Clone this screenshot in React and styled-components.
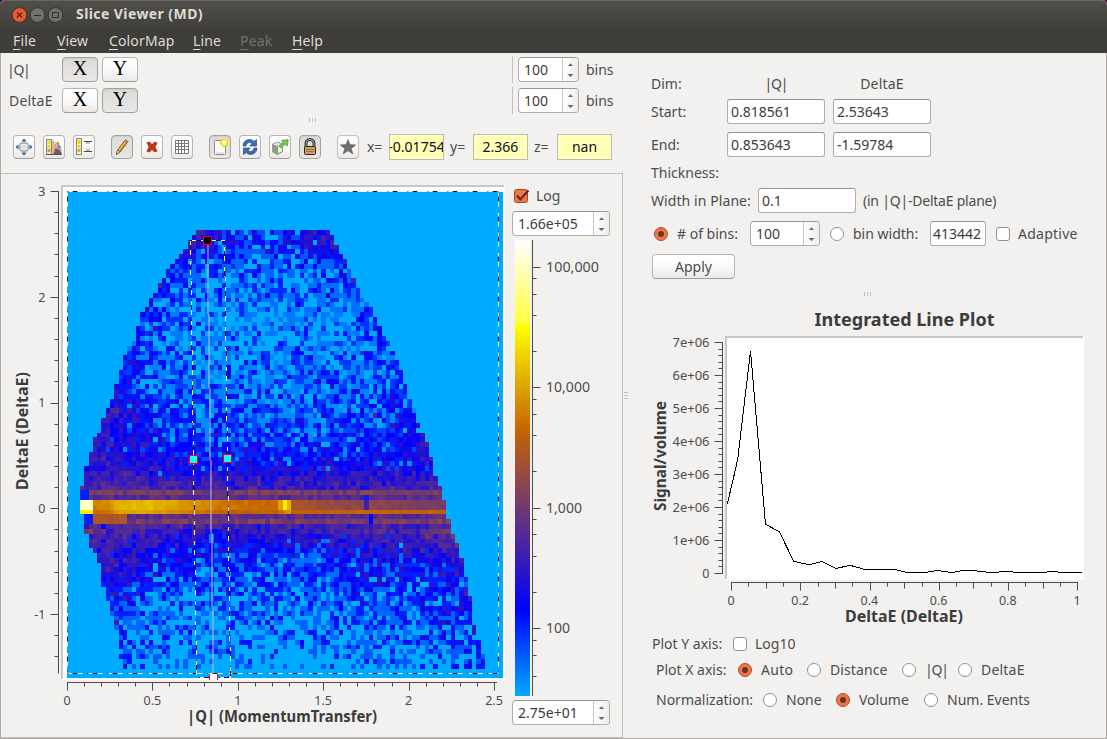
import React from "react";
import styled, { createGlobalStyle, css } from "styled-components";

const Global = createGlobalStyle`
  * { box-sizing: border-box; }
  html, body { margin: 0; padding: 0; background: #f2f1f0; overflow: hidden; }
  body, text { font-family: "Noto Sans", "Open Sans", sans-serif; }
  body { font-size: 14px; color: #4c4c4c; line-height: 18px; }
  svg { display: block; }
`;

/* ---------- window chrome ---------- */
const Window = styled.div`
  width: 1107px;
  height: 739px;
  display: flex;
  flex-direction: column;
  background: #f2f1f0;
  overflow: hidden;
`;
const TitleBar = styled.header`
  height: 28px;
  flex: none;
  display: flex;
  align-items: center;
  padding-left: 12px;
  border-top: 1px solid #66655f;
  border-radius: 5px 5px 0 0;
  background: linear-gradient(#504f49, #403f3b);
  box-shadow: 0 -6px 0 #40102c;
`;
const WindowTitle = styled.h1`
  margin: 0 0 2px 12px;
  font-size: 14px;
  font-weight: 700;
  letter-spacing: 0.42px;
  color: #dfdbd2;
`;
const MenuBar = styled.nav`
  height: 25px;
  flex: none;
  display: flex;
  padding: 4px 0 0 13px;
  background: #3e3d39;
  color: #dfdbd2;
`;
const MenuItem = styled.span`
  width: ${(p) => p.$w}px;
  color: ${(p) => (p.$off ? "#74726b" : "inherit")};
  letter-spacing: 0.14px;
  white-space: nowrap;
  u { text-underline-offset: 3px; text-decoration-thickness: 1px; }
`;
const Body = styled.main`
  flex: 1;
  display: flex;
  border: solid #aeaaa5;
  border-width: 0 1px 1px 1px;
  min-height: 0;
`;
const LeftPane = styled.section`
  width: 622px;
  display: flex;
  flex-direction: column;
  flex: none;
`;
const RightPane = styled.section`
  flex: 1;
  display: flex;
  flex-direction: column;
  min-width: 0;
`;

/* ---------- controls ---------- */
const Text = styled.span`
  width: ${(p) => (p.$w ? p.$w + "px" : "auto")};
  text-align: ${(p) => p.$align || "left"};
  letter-spacing: ${(p) => p.$ls || 0}px;
  white-space: nowrap;
  flex: none;
`;
const Row = styled.div`
  display: flex;
  align-items: center;
  flex: none;
  height: ${(p) => p.$h}px;
  padding-left: ${(p) => p.$l || 0}px;
`;
const raised = css`
  border: 1px solid #b9b5b0;
  border-bottom-color: #9f9b96;
  border-radius: 4px;
  background: linear-gradient(#fff, #fbfafa 50%, #ebe9e7);
`;
const pressed = css`
  border: 1px solid #a5a19c;
  border-radius: 4px;
  background: linear-gradient(#dcdad8, #e9e7e5);
  box-shadow: inset 0 1px 1px #cfccc9;
`;
const DimButton = styled.button`
  ${(p) => (p.$on ? pressed : raised)}
  width: 36px;
  height: 25px;
  margin-right: 4px;
  padding: 0 0 2px;
  font: 20px/21px "Liberation Serif", serif;
  color: #000;
`;
const ToolButton = styled.button`
  ${(p) => (p.$on ? pressed : raised)}
  width: 22px;
  height: 24px;
  margin-right: 8px;
  padding: 0;
  display: flex;
  align-items: center;
  justify-content: center;
  flex: none;
  opacity: ${(p) => (p.$dim ? 0.8 : 1)};
`;
const ToolGap = styled.i`
  width: ${(p) => p.$w}px;
  flex: none;
`;
const VGap = styled.i`
  height: ${(p) => p.$h}px;
  flex: none;
`;
const PushButton = styled.button`
  ${raised}
  width: 83px;
  height: 25px;
  margin: 8px 0 0 1px;
  padding: 0;
  display: block;
  font: inherit;
  color: inherit;
`;
const Field = styled.div`
  width: ${(p) => p.$w}px;
  height: 25px;
  flex: none;
  display: flex;
  align-items: center;
  justify-content: ${(p) => (p.$end ? "flex-end" : "flex-start")};
  padding: 0 4px 0 3px;
  border: 1px solid #b0aca7;
  border-top-color: #989490;
  border-radius: 3px;
  background: #fff;
  color: #3c3c3c;
  overflow: hidden;
  white-space: nowrap;
`;
const SpinBox = styled.div`
  width: ${(p) => p.$w}px;
  height: 25px;
  flex: none;
  display: flex;
  border: 1px solid #b0aca7;
  border-top-color: #989490;
  border-radius: 4px;
  background: #fff;
  color: #3c3c3c;
  overflow: hidden;
`;
const SpinValue = styled.span`
  flex: 1;
  padding: 3px 0 0 5px;
  white-space: nowrap;
`;
const SpinArrows = styled.span`
  width: 16px;
  border-left: 1px solid #c9c6c2;
  background: linear-gradient(90deg, #fff, #efedeb);
`;
const Readout = styled.output`
  width: 55px;
  height: 26px;
  margin-right: 6px;
  flex: none;
  display: flex;
  align-items: center;
  justify-content: center;
  overflow: hidden;
  white-space: nowrap;
  border: 1px solid #bcb9b5;
  background: #ffffb8;
  color: #111;
`;
const Divider = styled.i`
  width: 1px;
  height: 27px;
  margin-right: 5px;
  background: #c4c1bd;
`;
const RadioRing = styled.span`
  width: 14px;
  height: 14px;
  flex: none;
  display: flex;
  align-items: center;
  justify-content: center;
  border-radius: 50%;
  border: 1px solid ${(p) => (p.$on ? "#b04a28" : "#94908b")};
  background: ${(p) => (p.$on ? "#ee7648" : "#fff")};
  &::after {
    content: "";
    width: 6px;
    height: 6px;
    border-radius: 50%;
    background: ${(p) => (p.$on ? "#6b3420" : "transparent")};
  }
`;
const CheckSquare = styled.span`
  width: 14px;
  height: 14px;
  flex: none;
  border-radius: 3px;
  border: 1px solid #94908b;
  background: #fff;
`;
const Grip = styled.div`
  display: flex;
  flex-direction: ${(p) => (p.$v ? "column" : "row")};
  align-items: center;
  justify-content: center;
  gap: 2px;
  flex: none;
  width: ${(p) => (p.$v ? "6px" : "auto")};
  height: ${(p) => (p.$v ? "auto" : "8px")};
  i {
    width: ${(p) => (p.$v ? 4 : 1)}px;
    height: ${(p) => (p.$v ? 1 : 4)}px;
    background: #c6c3bf;
  }
`;
const Dots = ({ v }) => (
  <Grip $v={v}><i /><i /><i /></Grip>
);

const Spin = ({ w, children }) => (
  <SpinBox $w={w}>
    <SpinValue>{children}</SpinValue>
    <SpinArrows>
      <svg width="15" height="23">
        <path d="M5 8 L7.5 5.2 L10 8Z M4.5 16 L10.5 16 L7.5 19Z" fill="#6a6866" />
      </svg>
    </SpinArrows>
  </SpinBox>
);

/* ---------- left side ---------- */
const ToolRow = styled(Row)`
  margin-bottom: 3px;
`;
const PlotPanel = styled.div`
  flex: 1;
  display: flex;
  border: solid #c2bfbb;
  border-width: 1px 1px 1px 0;
  min-height: 0;
`;
const ColourColumn = styled.div`
  display: flex;
  flex-direction: column;
  padding: 12px 0 0 5px;
`;
const LogRow = styled.label`
  display: flex;
  align-items: center;
  gap: 6px;
  height: 20px;
  margin: 0 0 5px 2px;
`;

/* ---------- right side ---------- */
const Form = styled.div`
  padding: 15px 0 0 22px;
`;
const Columns = styled.div`
  display: grid;
  grid-template-columns: 68px 98px 98px;
  grid-template-rows: 31px 25px 41px;
  column-gap: 8px;
  align-items: center;
`;
const Options = styled.div`
  display: flex;
  flex-direction: column;
`;

/* ---------- tool icons ---------- */
const ICONS = {
  fit: (
    <>
      <rect x="6" y="6" width="8" height="8" rx="1.5" fill="#eee" stroke="#777" />
      <rect x="8" y="8" width="4" height="4" fill="#ddd" />
      <path d="M10 1.5 L12.6 4.5 H7.4Z M10 18.5 L12.6 15.5 H7.4Z M1.5 10 L4.5 7.4 V12.6Z M18.5 10 L15.5 7.4 V12.6Z" fill="#2d5c9e" />
    </>
  ),
  autoscale: (
    <>
      <rect x="2.5" y="2.5" width="5" height="15" fill="#e8e4d8" stroke="#888" />
      <path d="M3.5 4h3v3h-3zM3.5 8h3v3h-3z" fill="#ffd900" />
      <path d="M3.5 12h3v3h-3z" fill="#cfa030" />
      <path d="M8 17 V3 L10.5 3.5 L18 13 V17Z" fill="#c4c2be" />
      <path d="M8.2 12 L10.5 5 L12 6.5 L11 14 L9 16Z" fill="#f0b060" />
      <path d="M11 8 L13.5 4.5 L15.5 6 L13.5 10Z" fill="#e8873a" />
      <path d="M12.5 10 L15 7.5 L17 10.5 L15 13Z" fill="#5a6cae" />
      <path d="M9.5 17 L11.5 11 L14 12.5 L16.5 12 L17.5 17Z" fill="#7a5560" />
      <path d="M10 4 L17.5 15" stroke="#f6f6f6" strokeWidth=".7" />
      <path d="M2 17.5H18" stroke="#555" />
    </>
  ),
  range: (
    <>
      <rect x="2.5" y="1.5" width="5" height="16" fill="#f4f0e4" stroke="#888" />
      <path d="M3.5 3h3v4h-3zM3.5 8h3v3h-3z" fill="#f5da00" />
      <path d="M3.5 12h3v3h-3z" fill="#cfae50" />
      <path d="M10 4.5H18M10 14.5H18" stroke="#444" />
      <path d="M12 7 L14 5.2 L16 7M12 12 L14 13.8 L16 12" stroke="#888" fill="none" />
    </>
  ),
  pencil: (
    <>
      <path d="M4.3 17.5 L5.6 13 L13.4 2.8 L16 4.5 L8.2 15Z" fill="#d9932c" stroke="#6d4413" strokeWidth=".8" />
      <path d="M4.3 17.5 L5.6 13 L8.2 15Z" fill="#e8d7b0" stroke="#555" strokeWidth=".6" />
      <path d="M6.7 13 L14 3.8" stroke="#f6c767" />
      <path d="M13.4 2.8 L16 4.5 L14.9 6 L12.3 4.2Z" fill="#c67c5c" />
    </>
  ),
  cross: <path d="M5 5.8 L7.6 5 L10 7.8 L12.6 5 L15 6 L12.8 10 L15 14 L12.6 15 L10 12.3 L7.6 15 L5 14.2 L7.2 10Z" fill="#c8330d" stroke="#9c2508" strokeWidth=".8" />,
  grid: <path d="M3.5 3.5h13v13h-13zM6.5 3v14M9.5 3v14M12.5 3v14M3 6.5h14M3 9.5h14M3 12.5h14" fill="#fff" stroke="#777" />,
  newItem: (
    <>
      <rect x="4.5" y="3.5" width="11" height="14" rx="1" fill="#fafafa" stroke="#888" />
      <path d="M6 16h8" stroke="#ccc" />
      <path d="M14 0.8 L16 3 L19 3.4 L18 6.5 L18.4 9 L15.5 8.8 L13.2 10.5 L11.5 8.2 L9.4 6.5 L10.8 4Z" fill="#f5e100" />
      <circle cx="14.2" cy="5.6" r="2.3" fill="#fffde0" />
    </>
  ),
  refresh: (
    <>
      <path d="M3 9 C3 3 10 0.5 14 4.5 L16.5 2.5 V9 H9.8 L12 6.7 C9.5 4.5 7 5.5 6 9Z" fill="#3d6cb3" stroke="#204a87" strokeWidth=".7" />
      <path d="M17 11 C17 17 10 19.5 6 15.5 L3.5 17.5 V11 H10.2 L8 13.3 C10.5 15.5 13 14.5 14 11Z" fill="#3d6cb3" stroke="#204a87" strokeWidth=".7" />
    </>
  ),
  rebin: (
    <>
      <path d="M2.5 7 L7.5 5 L12.5 7 V14.5 L7.5 17.5 L2.5 15Z" fill="#e2e2de" stroke="#888" strokeWidth=".8" />
      <path d="M2.5 7 L7.5 9 V17.5 L2.5 15Z" fill="#97968f" />
      <path d="M7.5 9.5 L12.5 7.5 V14.5 L7.5 17.3Z" fill="#efefec" stroke="#6cb04c" />
      <path d="M9.5 9.5 C10 8 11.5 6.6 13.2 5.8 L11.5 3.6 L18.2 2.5 L17.4 9 L15.5 7.4 C13.6 8 12.4 9 11.6 11Z" fill="#7cc35c" stroke="#419327" strokeWidth=".7" />
    </>
  ),
  lock: (
    <>
      <path d="M6 10V6.5a4 4 0 0 1 8 0V10" stroke="#333" strokeWidth="3" fill="none" />
      <path d="M6 10V6.5a4 4 0 0 1 8 0V10" stroke="#aaa" strokeWidth="1" fill="none" />
      <rect x="4.5" y="9.5" width="11" height="8" rx="1" fill="#cf9f63" stroke="#33251a" />
      <path d="M6 12.5h8M6 14.5h8" stroke="#9c6f3b" />
    </>
  ),
  star: <path d="M10 2.4 L12 7.6 L17.8 7.9 L13.3 11.4 L14.8 17 L10 13.8 L5.2 17 L6.7 11.4 L2.2 7.9 L8 7.6Z" fill="#505050" stroke="#3e3e3e" strokeWidth=".6" />,
};
const IconSvg = styled.svg`
  flex: none;
`;
const Icon = ({ name }) => (
  <IconSvg width="20" height="20" viewBox="0 0 20 20">{ICONS[name]}</IconSvg>
);

/* ---------- colour scale ---------- */
const STOPS = [
  [0, 0, 170, 255],
  [0.19, 0, 0, 255],
  [0.585, 200, 100, 0],
  [0.813, 255, 255, 0],
  [0.817, 255, 255, 60],
  [1, 255, 255, 255],
];
function colour(t) {
  const v = Math.max(0, Math.min(1, t));
  let i = 1;
  while (i < STOPS.length - 1 && v > STOPS[i][0]) i++;
  const a = STOPS[i - 1];
  const b = STOPS[i];
  const f = (v - a[0]) / (b[0] - a[0]);
  return `rgb(${[1, 2, 3].map((k) => Math.round(a[k] + (b[k] - a[k]) * f)).join(",")})`;
}
function interp(table, y) {
  if (y <= table[0][0]) return table[0][1];
  for (let i = 1; i < table.length; i++) {
    if (y <= table[i][0]) {
      const [y0, v0] = table[i - 1];
      const [y1, v1] = table[i];
      return v0 + ((v1 - v0) * (y - y0)) / (y1 - y0);
    }
  }
  return table[table.length - 1][1];
}

/* ---------- heat map ---------- */
const LEFT_EDGE = [[230, 197], [237, 193], [241, 188], [255, 184], [260, 175], [273, 167], [288, 158], [302, 149], [317, 141], [336, 136], [346, 128], [360, 124], [379, 118], [393, 115], [409, 109], [418, 102], [428, 101], [442, 93], [462, 89], [471, 85], [490, 81], [515, 82], [523, 85], [547, 89], [557, 98], [577, 102], [601, 107], [625, 116], [655, 119], [668, 123]];
const RIGHT_EDGE = [[230, 330], [240, 335], [255, 343], [270, 351], [285, 356], [300, 363], [312, 374], [331, 382], [341, 389], [355, 395], [375, 403], [394, 408], [418, 417], [437, 425], [452, 430], [471, 434], [500, 445], [519, 448], [539, 454], [548, 459], [567, 464], [602, 471], [637, 476], [650, 483], [668, 484]];
const UNIT = [[230, 0.11], [260, 0.08], [330, 0.055], [380, 0.045], [420, 0.035], [470, 0.03], [540, 0.06], [600, 0.08], [668, 0.085]];
const MEAN_MID = [[230, 1.3], [245, 1.9], [262, 0.95], [310, 0.7], [350, 0.9], [380, 1.2], [410, 1.9], [435, 2.8], [455, 3.8], [468, 5.5], [476, 8], [485, 11], [526, 10], [534, 6], [545, 3.8], [560, 2.2], [580, 1.4], [600, 0.95], [640, 0.6], [660, 0.45], [668, 0.3]];
const BEAM = [[93, 0.62], [110, 0.64], [120, 0.7], [148, 0.71], [175, 0.68], [215, 0.62], [262, 0.585], [275, 0.6], [296, 0.52], [340, 0.48], [445, 0.42]];
const CELL_W = 4.31;
const CELL_H = 4.82;

function makeCells() {
  let s = 20117;
  const rnd = () => {
    s = (s + 0x6d2b79f5) | 0;
    let t = Math.imul(s ^ (s >>> 15), 1 | s);
    t = (t + Math.imul(t ^ (t >>> 7), 61 | t)) ^ t;
    return ((t ^ (t >>> 14)) >>> 0) / 4294967296;
  };
  const poisson = (m) => {
    const l = Math.exp(-m);
    let k = 0;
    let p = rnd();
    while (p > l) { k++; p *= rnd(); }
    return k;
  };
  const out = {};
  for (let r = 8; r < 99; r++) {
    const y = 191.5 + (r + 0.5) * CELL_H;
    const lo = interp(LEFT_EDGE, y);
    const hi = interp(RIGHT_EDGE, y);
    for (let c = 0; c < 100; c++) {
      const x = 67 + (c + 0.5) * CELL_W;
      if (x < lo || x > hi) continue;
      const dl = x - lo;
      const dr = hi - x;
      let t;
      if (r >= 64 && r <= 66) {
        t = interp(BEAM, x) + (rnd() - 0.5) * 0.03;
        if (r === 66) t = x > 250 ? 0.575 + (rnd() - 0.5) * 0.03 : t - 0.035;
        if (x < 93) t = r === 66 ? 0.79 : 0.91 + rnd() * 0.06;
        if (x > 279 && x < 284) t = r === 66 ? 0.6 : 0.68;
        if (x >= 284 && x < 288) t = r === 66 ? 0.63 : 0.79;
        if (x >= 288 && x < 292) t = r === 66 ? 0.66 : 0.7;
        if (r !== 66 && x > 364 && x < 369) t = 0.31;
      } else if (r === 62 || r === 63 || r === 67 || r === 68) {
        const strong = r === 62 || r === 68;
        t = (strong ? 0.42 : 0.36) + (rnd() - 0.5) * 0.09;
        if (r >= 67 && x > 93 && x < 126) t = 0.53 + (rnd() - 0.5) * 0.05;
        if (dl < 9) t = 0.15;
        if (r === 63 && x > 364 && x < 369) t = 0.16;
        if (r >= 67 && x > 368 && x < 373) t = 0.19;
      } else {
        let m = interp(MEAN_MID, y);
        const upper = y < 380;
        const edge = (upper ? 4 : 1.8) * Math.exp(-dl / (upper ? 17 : 15)) + (upper ? 2 : 1.5) * Math.exp(-dr / 22);
        m *= 1 + edge * (y > 460 && y < 530 ? 0 : y > 620 ? 1 : 0.85);
        if (y > 380 && y < 610) {
          const fade = Math.min(1, (y - 380) / 40, (610 - y) / 50);
          m += 3.2 * fade * Math.exp(-Math.pow((x - 122) / 34, 2));
        }
        if (y > 530 && x > 330) m *= 1.45;
        const n = poisson(m);
        if (!n) continue;
        t = interp(UNIT, y) + 0.115 * Math.log(n);
      }
      const key = Math.round(t * 90);
      const px = Math.round(67 + c * CELL_W);
      const py = Math.round(191.5 + r * CELL_H);
      const w = Math.round(67 + (c + 1) * CELL_W) - px;
      const h = Math.round(191.5 + (r + 1) * CELL_H) - py;
      out[key] = (out[key] || "") + `M${px} ${py}h${w}v${h}h${-w}z`;
    }
  }
  return out;
}
const CELLS = makeCells();

const Dashed = ({ d }) => (
  <g fill="none" strokeWidth="1">
    <path d={d} stroke="#111" strokeDasharray="1 4 5 10" />
    <path d={d} stroke="#e8f4fa" strokeDasharray="0 1 4 5 5 5" />
  </g>
);

const range = (n) => Array.from({ length: n }, (_, i) => i);
const AXIS = "#4c4c4c";

function SlicePlot() {
  const yTicks = range(23).map((i) => `M58.5 ${Math.round(191 + i * 21.15) + 0.5}h${i % 5 ? -4 : -8}`).join("");
  const xTicks = range(26).map((i) => `M${Math.round(67 + i * 17.08) + 0.5} 682.5v${i % 5 ? 4 : 8}`).join("");
  return (
    <svg width="506" height="563" viewBox="1 174 506 563" fontSize="12.5" fill={AXIS}>
      <path d="M61 185H505V680H61Z" fill="#fff" />
      <path d="M61 185H504V187H63V679H61Z" fill="#c8c7c6" />
      <rect x="67" y="192" width="436" height="486" fill="#00aaff" />
      <g shapeRendering="crispEdges">
        {Object.entries(CELLS).map(([k, d]) => (
          <path key={k} d={d} fill={colour(k / 90)} />
        ))}
      </g>
      <path d="M208 240V314M209 314V388M210 388V460M211 460V533M212 533V606M213 606V678" fill="none" stroke="#c4c4d4" strokeOpacity=".5" strokeWidth="2" />
      <Dashed d="M67.5 191.5H498.5" />
      <Dashed d="M67.5 191.5V673.5" />
      <Dashed d="M498.5 191.5V673.5" />
      <Dashed d="M67.5 673.5H498.5" />
      <g shapeRendering="crispEdges">
        <Dashed d="M190.5 240.5H224.5L230.5 677.5" />
        <Dashed d="M190.5 240.5L196.5 677.5H230.5" />
      </g>
      <g stroke="#f00" strokeWidth="1">
        <rect x="203.5" y="236.5" width="8" height="8" fill="#000" />
        <rect x="189.5" y="455.5" width="8" height="8" fill="#0ff" />
        <rect x="223.5" y="454.5" width="8" height="8" fill="#0ff" />
        <rect x="210" y="674" width="7" height="6" fill="#fff" stroke="none" />
        <path d="M209.5 674v6M217.5 674v6" />
      </g>
      <path d={`M58.5 191V673.5${yTicks}M67 682.5H497${xTicks}`} stroke={AXIS} fill="none" />
      {["3", "2", "1", "0", "-1"].map((v, i) => (
        <text key={v} x="45.5" y={196 + i * 105.7} textAnchor="end">{v}</text>
      ))}
      {["0", "0.5", "1", "1.5", "2", "2.5"].map((v, i) => (
        <text key={v} x={67 + i * 85.4} y="705" textAnchor="middle">{v}</text>
      ))}
      <g fontSize="15.5" fontWeight="700" fill="#3c3c3c">
        <text x="187" y="722" textLength="190" lengthAdjust="spacingAndGlyphs">|Q| (MomentumTransfer)</text>
        <text transform="translate(28 490) rotate(-90)" textLength="118" lengthAdjust="spacingAndGlyphs">DeltaE (DeltaE)</text>
      </g>
    </svg>
  );
}

function ColourBar() {
  const ticks = [];
  for (let e = 1; e <= 5; e++) {
    [1, 2, 4, 6, 8].forEach((k) => {
      const y = 628 - (e - 2 + Math.log10(k)) * 120.4;
      if (y > 240 && y < 696) ticks.push(`M532.5 ${Math.round(y) + 0.5}h${k === 1 ? 8 : 4}`);
    });
  }
  return (
    <svg width="108" height="462" viewBox="512 238 108 462" fontSize="14" fill={AXIS}>
      <defs>
        <linearGradient id="scale" x1="0" y1="1" x2="0" y2="0">
          {STOPS.map(([o]) => <stop key={o} offset={o} stopColor={colour(o)} />)}
        </linearGradient>
      </defs>
      <rect x="515" y="240" width="15" height="456" fill="url(#scale)" />
      <path d={`M532.5 240V696${ticks.join("")}`} stroke={AXIS} fill="none" />
      {[["100,000", 53], ["10,000", 44], ["1,000", 36], ["100", 24]].map(([v, w], i) => (
        <text key={v} x="546" y={272 + i * 120.4} textLength={w} lengthAdjust="spacingAndGlyphs">{v}</text>
      ))}
    </svg>
  );
}

function LinePlot() {
  const yT = range(36).map((i) => `M722.5 ${Math.round(342 + i * 6.6) + 0.5}h${i % 5 ? -4 : -8}`).join("");
  const xT = range(21).map((i) => `M${Math.round(731 + i * 17.32) + 0.5} 582.5v${i % 4 === 0 ? 8 : i % 2 ? 4 : 6}`).join("");
  return (
    <svg width="477" height="330" viewBox="629 300 477 330" fontSize="12.5" fill={AXIS}>
      <text x="814.5" y="326" fontSize="18.5" fontWeight="700" fill="#3c3c3c" textLength="180" lengthAdjust="spacingAndGlyphs">Integrated Line Plot</text>
      <path d="M725 336H1084V580H725Z" fill="#fff" />
      <path d="M725 336H1083V338H727V579H725Z" fill="#c8c7c6" />
      <polyline
        points="727.3,504 736.5,465 738,457 750.5,351 765.5,524.3 779.3,531.7 793.7,561.3 809,564.7 822,561.5 836,568.5 850,565.3 865,569.5 895,569.5 906.7,572.5 925,572.5 936.7,570.5 952.3,572.5 963,570.5 972,570.5 990,572.5 1008,571.5 1018,572.5 1042,572.5 1053,571.5 1062,572.5 1082,572.5"
        fill="none"
        stroke="#000"
        shapeRendering="crispEdges"
      />
      <path d={`M722.5 342V574${yT}M731 582.5H1078${xT}`} stroke={AXIS} fill="none" />
      {range(8).map((i) => (
        <text key={i} x="709.5" y={347 + i * 33} textAnchor="end" textLength={i === 7 ? undefined : 37} lengthAdjust="spacingAndGlyphs">
          {i === 7 ? "0" : `${7 - i}e+06`}
        </text>
      ))}
      {["0", "0.2", "0.4", "0.6", "0.8", "1"].map((v, i) => (
        <text key={v} x={731 + i * 69.2} y="605" textAnchor="middle">{v}</text>
      ))}
      <g fontSize="15.5" fontWeight="700" fill="#3c3c3c">
        <text x="845" y="622" textLength="118" lengthAdjust="spacingAndGlyphs">DeltaE (DeltaE)</text>
        <text transform="translate(665.5 511) rotate(-90)" textLength="110" lengthAdjust="spacingAndGlyphs">Signal/volume</text>
      </g>
    </svg>
  );
}

const DimRow = ({ name, x, y, ls, inset }) => (
  <Row $h={31} $l={inset}>
    <Text $w={61 - inset} $ls={ls}>{name}</Text>
    <DimButton $on={x}>X</DimButton>
    <DimButton $on={y}>Y</DimButton>
    <ToolGap $w={370} />
    <Divider />
    <Spin w={61}>100</Spin>
    <ToolGap $w={7} />
    <Text>bins</Text>
  </Row>
);

const Radio = ({ on, label, w, ls }) => (
  <>
    <RadioRing $on={on} />
    <ToolGap $w={9} />
    <Text $w={w} $ls={ls}>{label}</Text>
  </>
);

const MENU = [["File", 44], ["View", 52], ["ColorMap", 84], ["Line", 47], ["Peak", 52, true], ["Help", 50]];

export default function App() {
  return (
    <Window>
      <Global />
      <TitleBar>
        <svg width="52" height="18" viewBox="0 0 52 18">
          <circle cx="7.5" cy="9" r="7.4" fill="#e95a2c" stroke="#33322e" />
          <path d="M5 6.5l5 5M10 6.5l-5 5" stroke="#5a2311" strokeWidth="1.2" />
          <circle cx="25.5" cy="9" r="7.4" fill="#73716b" stroke="#33322e" />
          <path d="M22 9.5h7" stroke="#33322e" />
          <circle cx="43.5" cy="9" r="7.4" fill="#73716b" stroke="#33322e" />
          <rect x="40.5" y="6.5" width="6" height="5" fill="none" stroke="#33322e" />
        </svg>
        <WindowTitle>Slice Viewer (MD)</WindowTitle>
      </TitleBar>
      <MenuBar>
        {MENU.map(([m, w, off]) => (
          <MenuItem key={m} $w={w} $off={off}><u>{m[0]}</u>{m.slice(1)}</MenuItem>
        ))}
      </MenuBar>
      <Body>
        <LeftPane>
          <Row $h={1} />
          <DimRow name="|Q|" ls={-1.3} inset={6} x />
          <DimRow name="DeltaE" ls={0.2} inset={8} y />
          <Dots />
          <ToolRow $h={46} $l={12}>
            <ToolButton><Icon name="fit" /></ToolButton>
            <ToolButton><Icon name="autoscale" /></ToolButton>
            <ToolButton><Icon name="range" /></ToolButton>
            <ToolGap $w={8} />
            <ToolButton $on><Icon name="pencil" /></ToolButton>
            <ToolButton><Icon name="cross" /></ToolButton>
            <ToolButton><Icon name="grid" /></ToolButton>
            <ToolGap $w={8} />
            <ToolButton $on><Icon name="newItem" /></ToolButton>
            <ToolButton><Icon name="refresh" /></ToolButton>
            <ToolButton><Icon name="rebin" /></ToolButton>
            <ToolButton $on><Icon name="lock" /></ToolButton>
            <ToolGap $w={8} />
            <ToolButton $dim><Icon name="star" /></ToolButton>
            <Text $w={22} $ls={-0.2}>x=</Text>
            <Readout>-0.01754</Readout>
            <Text $w={23}>y=</Text>
            <Readout>2.366</Readout>
            <Text $w={23}>z=</Text>
            <Readout>nan</Readout>
          </ToolRow>
          <PlotPanel>
            <SlicePlot />
            <ColourColumn>
              <LogRow>
                <svg width="16" height="16" viewBox="0 0 16 16">
                  <rect x="0.5" y="1.5" width="13" height="13" rx="2" fill="#ee7648" stroke="#a8482a" />
                  <path d="M3 7.5L6.3 11.5L14.5 2.5" fill="none" stroke="#5c2c1c" strokeWidth="2" />
                </svg>
                <Text>Log</Text>
              </LogRow>
              <Spin w={98}>1.66e+05</Spin>
              <VGap $h={2} />
              <ColourBar />
              <Spin w={98}>2.75e+01</Spin>
            </ColourColumn>
          </PlotPanel>
        </LeftPane>
        <Dots v />
        <RightPane>
          <Form>
            <Columns>
              <Text>Dim:</Text><Text $align="center" $ls={-1.2}>|Q|</Text><Text $align="center" $ls={0.2}>DeltaE</Text>
              <Text>Start:</Text><Field $w={98}>0.818561</Field><Field $w={98}>2.53643</Field>
              <Text>End:</Text><Field $w={98}>0.853643</Field><Field $w={98}>-1.59784</Field>
            </Columns>
            <Row $h={15}><Text>Thickness:</Text></Row>
            <Row $h={41}>
              <Text $w={107} $ls={0.08}>Width in Plane:</Text>
              <Field $w={98}>0.1</Field>
              <ToolGap $w={7} />
              <Text $ls={-0.22}>(in |Q|-DeltaE plane)</Text>
            </Row>
            <Row $h={25} $l={3}>
              <Radio on label="# of bins:" w={73} />
              <Spin w={70}>100</Spin>
              <ToolGap $w={10} />
              <Radio label="bin width:" w={77} />
              <Field $w={56} $end>413442</Field>
              <ToolGap $w={10} />
              <CheckSquare />
              <ToolGap $w={8} />
              <Text $ls={0.25}>Adaptive</Text>
            </Row>
            <PushButton>Apply</PushButton>
          </Form>
          <VGap $h={11} />
          <Dots />
          <VGap $h={2} />
          <Options>
            <LinePlot />
            <Row $h={28} $l={23}>
              <Text $w={81}>Plot Y axis:</Text>
              <CheckSquare />
              <ToolGap $w={8} />
              <Text>Log10</Text>
            </Row>
            <Row $h={24} $l={27}>
              <Text $w={82}>Plot X axis:</Text>
              <Radio on label="Auto" w={46} ls={0.3} />
              <Radio label="Distance" w={72} ls={0.1} />
              <Radio label="|Q|" w={33} ls={-1.2} />
              <Radio label="DeltaE" ls={0.2} />
            </Row>
            <Row $h={36} $l={27}>
              <Text $w={107}>Normalization:</Text>
              <Radio label="None" w={50} />
              <Radio on label="Volume" w={65} />
              <Radio label="Num. Events" />
            </Row>
          </Options>
        </RightPane>
      </Body>
    </Window>
  );
}
